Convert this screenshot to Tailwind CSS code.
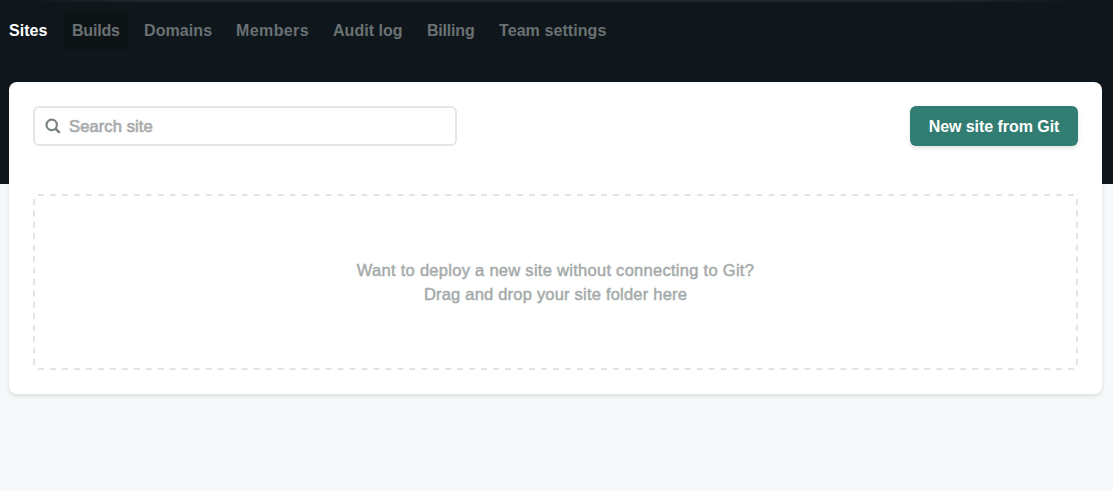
<!DOCTYPE html>
<html lang="en">
<head>
<meta charset="utf-8">
<title>Sites</title>
<script src="https://cdn.jsdelivr.net/npm/@tailwindcss/browser@4"></script>
</head>
<body class="h-[491px] overflow-hidden bg-[#f5f9fa] font-['Helvetica_Neue','Liberation_Sans',sans-serif] text-base leading-6">
<div class="h-[184px] bg-[#0f171c]">
  <div class="h-[2px] bg-linear-to-r from-[#0f171c] from-2% via-[#1d262d] via-12% to-[#1d262d] to-88%"><div class="ml-auto h-full w-[160px] bg-linear-to-r from-[#1d262d] to-[#0f171c] to-80%"></div></div>
  <nav class="flex h-14 items-center gap-2 pl-px font-bold text-[#6a7173]">
    <a class="w-[55px] px-2 pt-[2px] whitespace-nowrap text-white"><span class="tracking-[0.05px]">Sites</span></a>
    <a class="flex h-10 w-16 items-center rounded-md bg-[#0e1316] px-2 pt-[2px] whitespace-nowrap"><span class="tracking-[-0.2px]">Builds</span></a>
    <a class="w-[84px] px-2 pt-[2px] whitespace-nowrap"><span class="tracking-[0.08px]">Domains</span></a>
    <a class="w-[89px] px-2 pt-[2px] whitespace-nowrap"><span class="tracking-[0.4px]">Members</span></a>
    <a class="w-[86px] px-2 pt-[2px] whitespace-nowrap"><span class="tracking-[0.03px]">Audit log</span></a>
    <a class="w-[64px] px-2 pt-[2px] whitespace-nowrap"><span class="tracking-[-0.2px]">Billing</span></a>
    <a class="px-2 pt-[2px] whitespace-nowrap"><span class="tracking-[0.08px]">Team settings</span></a>
  </nav>
</div>
<main class="mr-[11px] ml-[9px] -mt-[102px] h-[312px] rounded-lg bg-white p-6 shadow-[0_2px_4px_rgba(14,30,37,0.12)]">
  <div class="flex h-10 items-center justify-between">
    <div class="flex h-10 w-[424px] items-center rounded-md border-2 border-[#e5e7e7] pl-[10px] text-[16.5px] text-[#a9adad] [-webkit-text-stroke:0.7px_#a9adad]">
      <svg class="mr-2 size-4" viewBox="0 0 16 16" fill="none" stroke="#7b8283" stroke-width="2.2" stroke-linecap="round"><circle cx="6.7" cy="6.9" r="5.2"/><path d="M10.8 11l3.2 3.2" stroke-width="2.6"/></svg>
      <span class="tracking-[0.12px]">Search site</span>
    </div>
    <button class="h-10 w-[168px] rounded-md bg-[#327d72] pt-[2px] font-bold whitespace-nowrap text-white shadow-[0_2px_4px_rgba(14,30,37,0.12)]"><span class="tracking-[-0.05px]">New site from Git</span></button>
  </div>
  <div class="relative mt-12 flex h-44 flex-col items-center justify-center text-center text-[16.5px] text-[#a5abaa] [-webkit-text-stroke:0.5px_#a5abaa]">
    <svg class="absolute inset-0" width="1045" height="176" viewBox="0 0 1045 176" fill="none" stroke="#e4e4e4" stroke-width="2">
      <path d="M5 1H1041M5 175H1041" stroke-dasharray="6 5.977"/>
      <path d="M1 5V171M1044 5V171" stroke-dasharray="6 5.43"/>
    </svg>
    <p class="tracking-[0.28px]">Want to deploy a new site without connecting to Git?</p>
    <p class="tracking-[0.21px]">Drag and drop your site folder here</p>
  </div>
</main>
</body>
</html>
